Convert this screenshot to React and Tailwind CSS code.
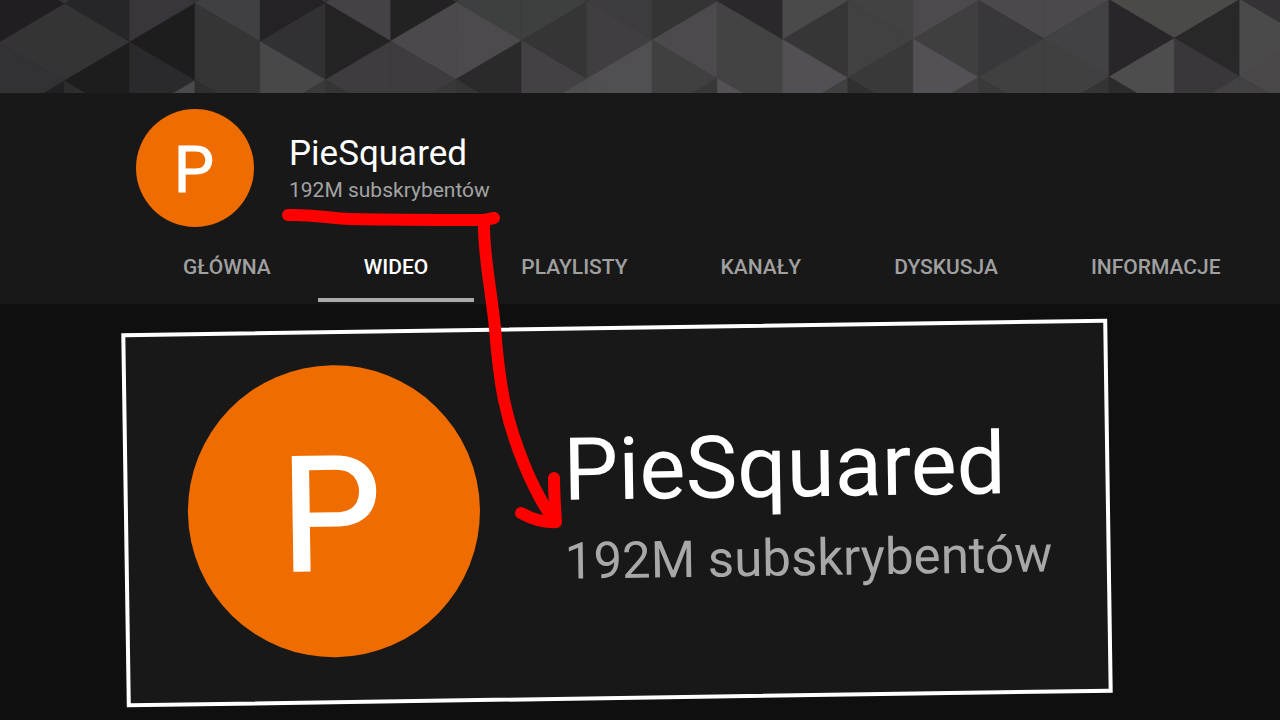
import React from 'react';

const COLUMN_WIDTH = 65.3;

// One entry per vertical strip of the banner, colors listed from top to bottom
const strips = [
  ['#201e20', '#343434', '#323234', '#222122'],
  ['#262628', '#343435', '#1e1d1e', '#2e2c2d'],
  ['#38363a', '#1d1d1d', '#2a2a2c', '#4a4a4a'],
  ['#403f42', '#353535', '#353535', '#2f2f30'],
  ['#242226', '#313033', '#484848', '#3a3a3a'],
  ['#444246', '#232323', '#3e3c3f', '#353535'],
  ['#222222', '#4b494b', '#3e3c3f', '#383838'],
  ['#3e3f3f', '#4c4a4c', '#2a2a2a', '#353535'],
  ['#3e3f3f', '#353536', '#434143', '#4e4e50'],
  ['#3c3c3e', '#403e41', '#505052', '#505052'],
  ['#343434', '#4c4a4c', '#404040', '#383838'],
  ['#2a282b', '#434343', '#434343', '#545254'],
  ['#4a4a4a', '#373637', '#525054', '#404040'],
  ['#434243', '#424142', '#393939', '#303030'],
  ['#4c4a4d', '#403f40', '#535156', '#404040'],
  ['#4b494c', '#38373a', '#404040', '#393939'],
  ['#4b494b', '#424143', '#404040', '#353435'],
  ['#4a4a49', '#282629', '#4d4d4d', '#2c2c2c'],
  ['#4a4a49', '#282829', '#39373a', '#424144'],
  ['#343235', '#4a4a4b', '#4a4849', '#424144'],
];

const tabs = [
  { name: 'GŁÓWNA', href: '#home' },
  { name: 'WIDEO', href: '#videos', active: true },
  { name: 'PLAYLISTY', href: '#playlists' },
  { name: 'KANAŁY', href: '#channels' },
  { name: 'DYSKUSJA', href: '#discussion' },
  { name: 'INFORMACJE', href: '#about' },
];

function Banner() {
  return (
    <svg
      className="block h-[93px] w-full bg-[#343434]"
      viewBox="0 0 1280 93"
      preserveAspectRatio="xMidYMid slice"
      aria-hidden="true"
    >
      {strips.map((colors, i) => {
        const left = -1 + i * COLUMN_WIDTH;
        const right = left + COLUMN_WIDTH;
        // Bases alternate between the two sides of a strip
        const near = i % 2 === 0 ? right : left;
        const far = i % 2 === 0 ? left : right;
        const top = 4 - i * 0.25;
        return colors.map((color, j) => {
          const y = top + (j - 1) * 38.5;
          const base = j % 2 === 0 ? far : near;
          const apex = j % 2 === 0 ? near : far;
          return (
            <polygon
              key={`${i}-${j}`}
              points={`${base},${y} ${base},${y + 77} ${apex},${y + 38.5}`}
              fill={color}
              stroke={color}
              strokeWidth="0.5"
            />
          );
        });
      })}
    </svg>
  );
}

function ChannelHeader() {
  return (
    <header className="bg-[#181818]">
      <div className="flex items-center gap-[35px] pt-4 pl-[136px]">
        <div className="flex size-[118px] shrink-0 items-center justify-center rounded-full bg-[#ef6c00] pt-1.5 pr-0.5 text-[64px] [-webkit-text-stroke:1px_white]">
          P
        </div>
        <div className="pt-1">
          <h1 className="text-[35px] leading-10">PieSquared</h1>
          <p className="text-[21px] leading-8 text-[#a3a3a3]">192M subskrybentów</p>
        </div>
      </div>
      <nav className="flex gap-px pl-[137px] pb-0.5">
        {tabs.map((tab) => (
          <a
            key={tab.name}
            href={tab.href}
            aria-current={tab.active ? 'page' : undefined}
            className={`border-b-4 px-[46px] pt-6 pb-[15px] text-[21px] leading-8 font-medium whitespace-nowrap ${
              tab.active ? 'border-[#aaaaaa] text-white' : 'border-transparent text-[#a0a0a0]'
            }`}
          >
            {tab.name}
          </a>
        ))}
      </nav>
    </header>
  );
}

function EnlargedCard() {
  return (
    <section className="mt-[22px] mr-[170px] ml-[124px] flex rotate-[-0.85deg] items-center gap-[84px] border-4 border-white bg-[#181818] pt-[31px] pb-[43px] pl-[60px]">
      <div className="flex size-[292px] shrink-0 items-center justify-center rounded-full bg-[#ef6c00] pt-2.5 pr-1.5 text-[160px] [-webkit-text-stroke:2px_white]">
        P
      </div>
      <div className="pt-2 whitespace-nowrap">
        <h2 className="text-[87px] leading-[100px]">PieSquared</h2>
        <p className="text-[51px] leading-[84px] text-[#a8a8a8]">192M subskrybentów</p>
      </div>
    </section>
  );
}

function RedArrow() {
  return (
    <svg
      className="pointer-events-none absolute top-0 left-0"
      width="640"
      height="560"
      viewBox="0 0 640 560"
      fill="none"
      stroke="#ff0000"
      strokeWidth="12"
      strokeLinecap="round"
      strokeLinejoin="round"
      aria-hidden="true"
    >
      <path d="M288 215C310 214 325 218 350 219C400 220 450 220 484 220L494 218" />
      <path d="M484 222C483 252 491 288 495 328C497 355 499 375 504 400C513 442 532 490 555 522" />
      <path d="M554 478C554 492 555 507 556 522C543 523 532 519 521 513" />
    </svg>
  );
}

export default function App() {
  return (
    <div className="relative min-h-screen overflow-hidden bg-[#0f0f0f] font-['Roboto',sans-serif] text-white">
      <Banner />
      <ChannelHeader />
      <main>
        <EnlargedCard />
      </main>
      <RedArrow />
    </div>
  );
}
